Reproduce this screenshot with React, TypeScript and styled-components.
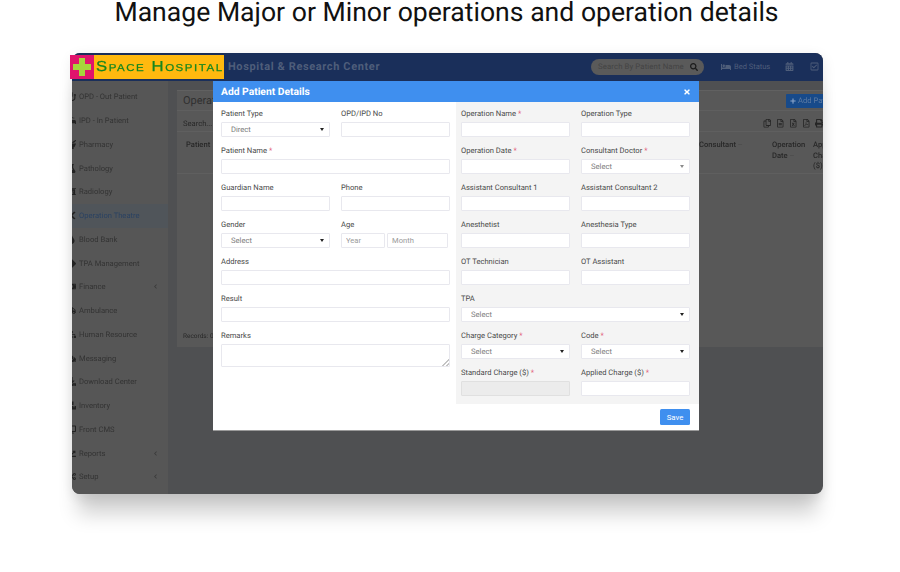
import React from "react";
import styled, { createGlobalStyle } from "styled-components";
import {
  FaAmbulance, FaBed, FaBoxes, FaCalendarAlt, FaChartLine, FaChevronLeft, FaCogs, FaComments, FaCut, FaDesktop,
  FaDownload, FaFlask, FaMoneyBillAlt, FaMortarPestle, FaPlus, FaPrint, FaProcedures, FaRegCheckSquare, FaRegCopy,
  FaRegFileAlt, FaRegFileExcel, FaRegFilePdf, FaSearch, FaSitemap, FaStethoscope, FaTag, FaTimes, FaTint, FaXRay,
} from "react-icons/fa";

const Global = createGlobalStyle`
  html, body { margin: 0; padding: 0; background: #fff; overflow: hidden; }
  * { box-sizing: border-box; }
  body { font-family: Roboto, "Liberation Sans", sans-serif; text-rendering: geometricPrecision; }
`;

const Page = styled.div`
  width: 900px;
  height: 572px;
  overflow: hidden;
  background: #fff;
`;
const Heading = styled.h1`
  margin: 0;
  height: 53px;
  padding-right: 7px;
  text-align: center;
  font-size: 26.6px;
  line-height: 25px;
  font-weight: 400;
  color: #111;
`;
const Stage = styled.div`
  position: relative;
  margin-left: 72px;
  width: 751px;
  height: 441px;
  filter: blur(0.25px);
`;
const Frame = styled.div`
  width: 100%;
  height: 100%;
  border-radius: 8px;
  box-shadow: 0 26px 20px -6px rgba(0, 0, 0, 0.18), 0 4px 14px rgba(0, 0, 0, 0.1);
`;
const Window = styled.div`
  width: 100%;
  height: 100%;
  border-radius: 8px;
  overflow: hidden;
  display: flex;
  flex-direction: column;
  background: #4f5052;
`;
const Logo = styled.div`
  position: absolute;
  left: -2px;
  top: 2px;
  width: 154px;
  height: 24px;
  display: flex;
  background: #ffb90f;
`;
const LogoMark = styled.div`
  width: 24px;
  height: 24px;
  background: #e0146c;
  display: flex;
  align-items: center;
  justify-content: center;
`;
const LogoText = styled.span`
  margin-left: 2px;
  font-family: "Liberation Sans", sans-serif;
  font-variant: small-caps;
  font-size: 14.5px;
  line-height: 24px;
  letter-spacing: 1.35px;
  color: #15861f;
  -webkit-text-stroke: 0.25px #15861f;
  white-space: nowrap;
  display: inline-block;
  transform-origin: left center;
  transform: scaleX(1.15);
`;
const Header = styled.header`
  height: 28px;
  flex: none;
  background: #1a2f5a;
  display: flex;
  align-items: center;
  padding-left: 119px;
  color: #4f5e7a;
  overflow: hidden;
`;
const Brand = styled.div`
  flex: none;
  font-size: 11px;
  font-weight: 700;
  letter-spacing: 0.62px;
  white-space: nowrap;
  width: 400px;
  margin-top: -1px;
`;
const SearchPill = styled.div`
  flex: none;
  width: 113px;
  height: 16px;
  border-radius: 8px;
  background: #5a5a5a;
  display: flex;
  align-items: center;
  justify-content: space-between;
  padding: 0 6px 0 7px;
  font-size: 7.8px;
  letter-spacing: 0.1px;
  color: #444;
  margin-top: -1px;
`;
const SearchIcon = styled(FaSearch)`
  color: #1c1c1c;
`;
const BedStatus = styled.div`
  flex: none;
  margin-left: 17px;
  width: 64px;
  display: flex;
  align-items: center;
  gap: 3px;
  font-size: 7.5px;
  margin-top: -1px;
`;
const HeaderIcon = styled.span`
  flex: none;
  display: flex;
  margin-right: 16px;
  margin-top: -1px;
`;
const Main = styled.div`
  flex: 1;
  min-height: 0;
  display: flex;
`;
const Sidebar = styled.nav`
  width: 96px;
  flex: none;
  background: #565656;
  padding-top: 4px;
`;
const NavItem = styled.div<{ $active?: boolean }>`
  height: 23.75px;
  display: flex;
  align-items: center;
  font-size: 7.6px;
  color: ${(p) => (p.$active ? "#2a4262" : "#333")};
  background: ${(p) => (p.$active ? "#50555a" : "transparent")};
`;
const NavIcon = styled.span`
  width: 7px;
  height: 9px;
  flex: none;
  display: flex;
  justify-content: flex-end;
  overflow: hidden;
  padding-right: 3px;
  color: #222;
  & svg { flex: none; }
`;
const NavLabel = styled.span`
  flex: 1;
`;
const NavArrow = styled(FaChevronLeft)`
  margin-right: 10px;
  color: #3a3a3a;
`;
const Content = styled.main`
  flex: 1;
  min-width: 0;
  padding: 9px 0 0 9px;
`;
const Card = styled.section`
  height: 257px;
  background: #585858;
  display: flex;
  flex-direction: column;
  color: #282828;
  font-size: 7.6px;
  border-top: 1px solid #616161;
`;
const CardHead = styled.div`
  height: 20px;
  flex: none;
  display: flex;
  align-items: center;
  justify-content: space-between;
  padding-left: 6px;
  border-bottom: 1px solid #5f5f5f;
`;
const CardTitle = styled.h2`
  margin: 0;
  font-size: 11px;
  font-weight: 400;
  color: #303030;
`;
const AddButton = styled.div`
  flex: none;
  width: 54px;
  margin-right: -17px;
  height: 14px;
  background: #174a8a;
  color: #5d7ba3;
  border-radius: 1px;
  display: flex;
  align-items: center;
  gap: 2px;
  padding-left: 4px;
  font-size: 7.6px;
`;
const Toolbar = styled.div`
  height: 20px;
  flex: none;
  display: flex;
  align-items: center;
  justify-content: space-between;
  padding: 5px 0 0 6px;
`;
const ToolIcons = styled.div`
  display: flex;
  gap: 4.5px;
  color: #262626;
`;
const TableHead = styled.div`
  height: 43px;
  flex: none;
  display: grid;
  grid-template-columns: 513px 73px 41px 60px;
  padding: 8px 0 0 9px;
  line-height: 10.5px;
  font-weight: 500;
  border-top: 1px solid #5f5f5f;
  border-bottom: 1px solid #5f5f5f;
`;
const SortMark = styled.span`
  color: #4c4c4c;
`;
const Records = styled.div`
  margin-top: auto;
  padding: 0 0 7px 6px;
  font-size: 6.5px;
`;
const Modal = styled.div`
  position: absolute;
  left: 141px;
  top: 28px;
  width: 486px;
  height: 350px;
  background: #fff;
  border-bottom: 1px solid #9a9a9a;
  display: flex;
  flex-direction: column;
`;
const ModalHead = styled.div`
  height: 21px;
  flex: none;
  background: #3f8fef;
  color: #fff;
  display: flex;
  align-items: center;
  justify-content: space-between;
  padding: 0 8px;
  font-size: 10.3px;
  font-weight: 700;
`;
const ModalBody = styled.div`
  display: grid;
  grid-template-columns: 243px 243px;
  height: 302px;
  flex: none;
  border-bottom: 1px solid #f3f3f3;
`;
const FormColumn = styled.div<{ $shaded?: boolean }>`
  background: ${(p) => (p.$shaded ? "#f4f4f4" : "#fff")};
  padding: 6px 9px 0 ${(p) => (p.$shaded ? "5px" : "8px")};
  display: grid;
  grid-template-columns: 109px 109px;
  column-gap: 11px;
  grid-auto-rows: 37px;
  align-content: start;
  justify-content: space-between;
`;
const Field = styled.div<{ $wide?: boolean }>`
  grid-column: ${(p) => (p.$wide ? "1 / -1" : "auto")};
  min-width: 0;
`;
const Label = styled.div`
  height: 13.5px;
  font-size: 7.6px;
  line-height: 11px;
  color: #4a4a4a;
  white-space: nowrap;
`;
const Required = styled.span`
  color: #e2607a;
  margin-left: 2px;
`;
const Input = styled.input`
  display: block;
  width: 100%;
  height: 15.5px;
  padding: 0 9px;
  background: ${(p) => (p.disabled ? "#ececec" : "#fff")};
  border: 1px solid ${(p) => (p.disabled ? "#e0e0e0" : "#e8e8ee")};
  border-radius: 1px;
  outline: none;
  font: 7.6px Roboto, sans-serif;
  &::placeholder { color: #9a9a9a; }
`;
const AgeRow = styled.div`
  display: flex;
  gap: 2px;
  width: 107px;
`;
const AgeInput = styled(Input)<{ $w: number }>`
  width: ${(p) => p.$w}px;
  flex: none;
  padding: 0 4px;
`;
const SelectBox = styled.div<{ $soft?: boolean }>`
  height: 15.5px;
  padding: 0 10px 0 9px;
  background: #fff;
  border: 1px solid #e8e8ee;
  border-radius: 1px;
  display: flex;
  align-items: center;
  justify-content: space-between;
  font-size: 7.6px;
  color: #7b7b7b;
  &::after {
    content: "";
    width: 0;
    height: 0;
    margin-right: -5px;
    border-left: 2px solid transparent;
    border-right: 2px solid transparent;
    border-top: 3.5px solid ${(p) => (p.$soft ? "#8a8a8a" : "#222")};
  }
`;
const Notes = styled.textarea`
  display: block;
  width: 100%;
  height: 23px;
  min-height: 23px;
  border: 1px solid #e8e8ee;
  border-radius: 1px;
  outline: none;
  padding: 0;
  resize: vertical;
  &::-webkit-resizer {
    background: no-repeat right bottom / 7px 7px
      linear-gradient(135deg, transparent 50%, #c4c4c4 50%, #c4c4c4 62%, transparent 62%, transparent 76%, #c4c4c4 76%, #c4c4c4 88%, transparent 88%);
  }
`;
const ModalFoot = styled.div`
  flex: 1;
  display: flex;
  align-items: flex-start;
  justify-content: flex-end;
  padding: 5px 9px 0 0;
`;
const SaveButton = styled.button`
  width: 30px;
  height: 16px;
  border: 0;
  padding: 0;
  border-radius: 1.5px;
  background: #3f8fef;
  color: #fff;
  font: 400 7.8px Roboto, sans-serif;
`;

const Cross = () => (
  <svg width="20" height="20" viewBox="0 0 20 20" aria-hidden="true">
    <path d="M7 1h6v6h6v6h-6v6H7v-6H1V7h6z" fill="#a6d63c" />
  </svg>
);

const navItems: { label: string; Icon: React.ComponentType<{ size?: number }>; arrow?: boolean; active?: boolean }[] = [
  { label: "OPD - Out Patient", Icon: FaStethoscope },
  { label: "IPD - In Patient", Icon: FaProcedures },
  { label: "Pharmacy", Icon: FaMortarPestle },
  { label: "Pathology", Icon: FaFlask },
  { label: "Radiology", Icon: FaXRay },
  { label: "Operation Theatre", Icon: FaCut, active: true },
  { label: "Blood Bank", Icon: FaTint },
  { label: "TPA Management", Icon: FaTag },
  { label: "Finance", Icon: FaMoneyBillAlt, arrow: true },
  { label: "Ambulance", Icon: FaAmbulance },
  { label: "Human Resource", Icon: FaSitemap },
  { label: "Messaging", Icon: FaComments },
  { label: "Download Center", Icon: FaDownload },
  { label: "Inventory", Icon: FaBoxes },
  { label: "Front CMS", Icon: FaDesktop },
  { label: "Reports", Icon: FaChartLine, arrow: true },
  { label: "Setup", Icon: FaCogs, arrow: true },
];

const Text = ({ label, req, disabled, wide }: { label: string; req?: boolean; disabled?: boolean; wide?: boolean }) => (
  <Field $wide={wide}>
    <Label>
      {label}
      {req && <Required>*</Required>}
    </Label>
    <Input disabled={disabled} />
  </Field>
);

const Choice = ({ label, value = "Select", req, wide, soft }: { label: string; value?: string; req?: boolean; wide?: boolean; soft?: boolean }) => (
  <Field $wide={wide}>
    <Label>
      {label}
      {req && <Required>*</Required>}
    </Label>
    <SelectBox $soft={soft}>{value}</SelectBox>
  </Field>
);

export default function App() {
  return (
    <Page>
      <Global />
      <Heading>Manage Major or Minor operations and operation details</Heading>
      <Stage>
        <Frame>
          <Window>
            <Header>
              <Brand>Space Hospital &amp; Research Center</Brand>
              <SearchPill>
                Search By Patient Name
                <SearchIcon size={8} />
              </SearchPill>
              <BedStatus>
                <FaBed size={10} />
                Bed Status
              </BedStatus>
              <HeaderIcon>
                <FaCalendarAlt size={9} />
              </HeaderIcon>
              <HeaderIcon>
                <FaRegCheckSquare size={9} />
              </HeaderIcon>
            </Header>
            <Main>
              <Sidebar>
                {navItems.map(({ label, Icon, arrow, active }) => (
                  <NavItem key={label} $active={active}>
                    <NavIcon>
                      <Icon size={9} />
                    </NavIcon>
                    <NavLabel>{label}</NavLabel>
                    {arrow && <NavArrow size={5} />}
                  </NavItem>
                ))}
              </Sidebar>
              <Content>
                <Card>
                  <CardHead>
                    <CardTitle>Operation Theatre Patient</CardTitle>
                    <AddButton>
                      <FaPlus size={6} color="#8aa4c8" />
                      Add Patient
                    </AddButton>
                  </CardHead>
                  <Toolbar>
                    <span>Search...</span>
                    <ToolIcons>
                      <FaRegCopy size={8.5} />
                      <FaRegFileAlt size={8.5} />
                      <FaRegFileExcel size={8.5} />
                      <FaRegFilePdf size={8.5} />
                      <FaPrint size={8.5} />
                    </ToolIcons>
                  </Toolbar>
                  <TableHead>
                    <span>Patient</span>
                    <span>
                      Consultant <SortMark>–</SortMark>
                    </span>
                    <span>
                      Operation
                      <br />
                      Date <SortMark>–</SortMark>
                    </span>
                    <span>
                      Applied
                      <br />
                      Charge
                      <br />
                      ($)
                    </span>
                  </TableHead>
                  <Records>Records: 0 / 0</Records>
                </Card>
              </Content>
            </Main>
          </Window>
        </Frame>
        <Logo>
          <LogoMark>
            <Cross />
          </LogoMark>
          <LogoText>Space Hospital</LogoText>
        </Logo>
        <Modal>
          <ModalHead>
            Add Patient Details
            <FaTimes size={8} />
          </ModalHead>
          <ModalBody>
            <FormColumn>
              <Choice label="Patient Type" value="Direct" />
              <Text label="OPD/IPD No" />
              <Text label="Patient Name" req wide />
              <Text label="Guardian Name" />
              <Text label="Phone" />
              <Choice label="Gender" />
              <Field>
                <Label>Age</Label>
                <AgeRow>
                  <AgeInput $w={44} placeholder="Year" />
                  <AgeInput $w={61} placeholder="Month" />
                </AgeRow>
              </Field>
              <Text label="Address" wide />
              <Text label="Result" wide />
              <Field $wide>
                <Label>Remarks</Label>
                <Notes />
              </Field>
            </FormColumn>
            <FormColumn $shaded>
              <Text label="Operation Name" req />
              <Text label="Operation Type" />
              <Text label="Operation Date" req />
              <Choice label="Consultant Doctor" req soft />
              <Text label="Assistant Consultant 1" />
              <Text label="Assistant Consultant 2" />
              <Text label="Anesthetist" />
              <Text label="Anesthesia Type" />
              <Text label="OT Technician" />
              <Text label="OT Assistant" />
              <Choice label="TPA" wide />
              <Choice label="Charge Category" req />
              <Choice label="Code" req />
              <Text label="Standard Charge ($)" req disabled />
              <Text label="Applied Charge ($)" req />
            </FormColumn>
          </ModalBody>
          <ModalFoot>
            <SaveButton>Save</SaveButton>
          </ModalFoot>
        </Modal>
      </Stage>
    </Page>
  );
}
